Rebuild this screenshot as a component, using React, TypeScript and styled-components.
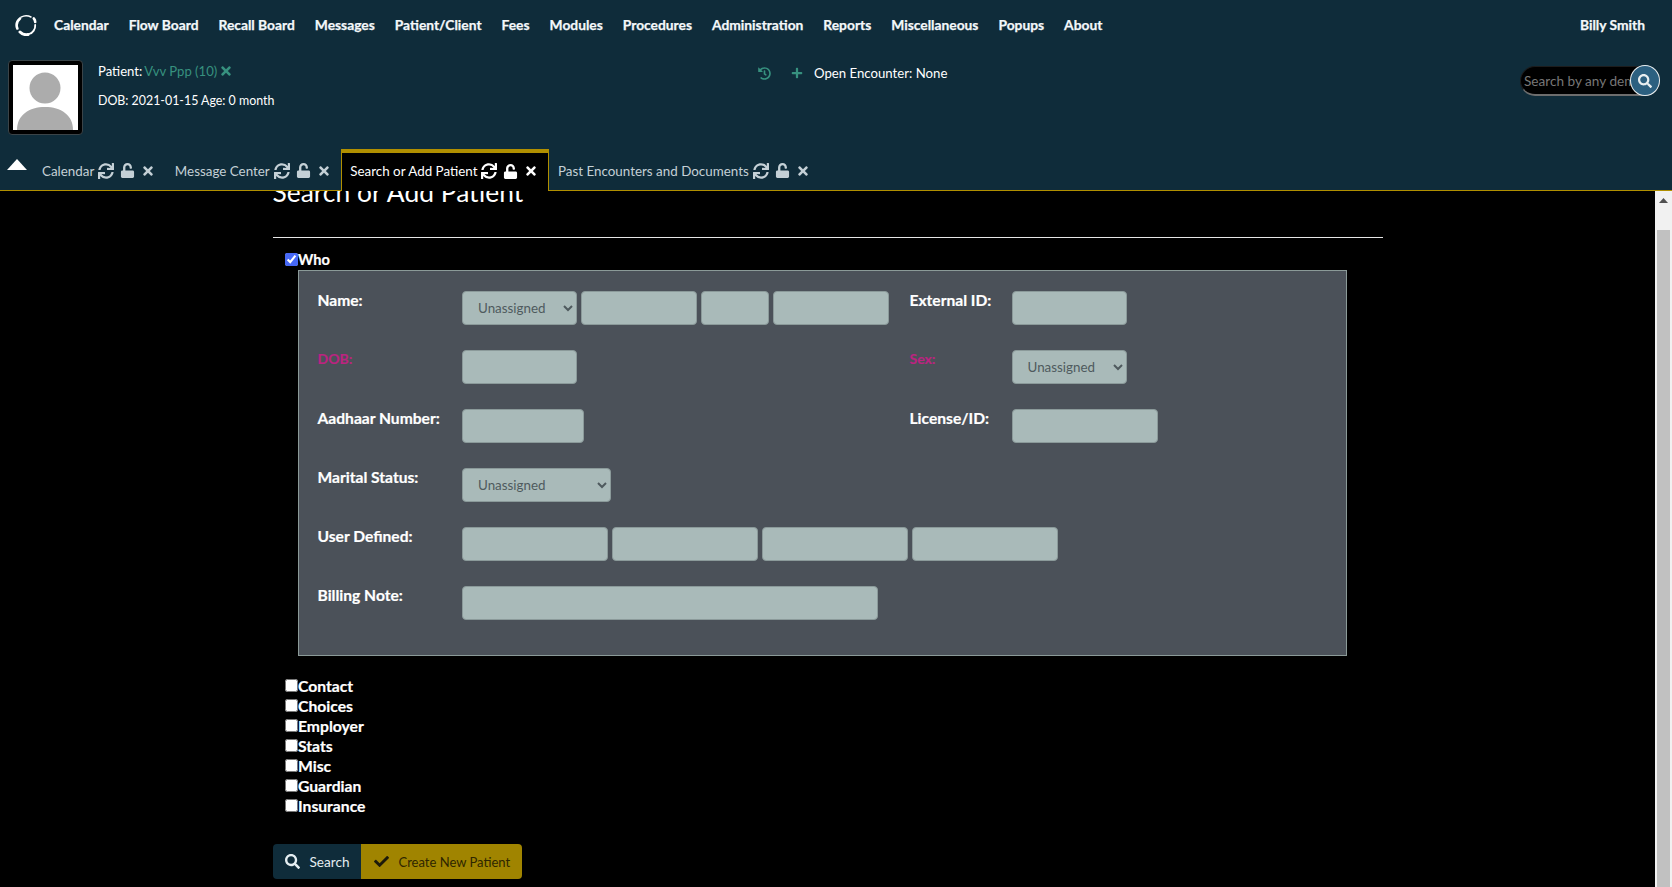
import React from "react";
import styled, { createGlobalStyle } from "styled-components";
import { FaCheck, FaHistory, FaPlus, FaSearch, FaSync, FaTimes, FaUnlock } from "react-icons/fa";

const Global = createGlobalStyle`
  html, body { margin: 0; padding: 0; height: 100%; overflow: hidden; background: #000; }
  body { font-family: "Lato", "Liberation Sans", sans-serif; color: #fff; }
  * { box-sizing: border-box; }
`;

const Page = styled.div`
  display: flex;
  flex-direction: column;
  height: 887px;
  overflow: hidden;
`;
const Header = styled.header`
  flex: none;
  height: 191px;
  background: #0f2c3a;
  border-bottom: 1px solid #b08f00;
`;
const Nav = styled.nav`
  height: 50px;
  display: flex;
  align-items: center;
  padding: 0 27px 1px 15px;
`;
const Logo = styled.svg`
  width: 22px;
  height: 22px;
  margin-right: 17px;
  flex: none;
`;
const Menu = styled.div`
  display: flex;
  gap: 20px;
  flex: 1;
`;
const MenuItem = styled.span`
  font-size: 13.8px;
  font-weight: 700;
  color: #f4f8fa;
  -webkit-text-stroke: 0.25px #f4f8fa;
`;
const Info = styled.div`
  height: 99px;
  display: flex;
  padding: 10px 12px 0 8px;
`;
const Avatar = styled.div`
  width: 75px;
  height: 75px;
  flex: none;
  background: #000;
  border: 1px solid #3b4448;
  border-radius: 4px;
  padding: 4px;
`;
const AvatarArt = styled.svg`
  width: 65px;
  height: 65px;
  display: block;
`;
const PatientBlock = styled.div`
  width: 660px;
  margin: -3px 0 0 15px;
`;
const PatientLine = styled.div<{ $size: number; $gap?: number }>`
  height: 28px;
  display: flex;
  align-items: center;
  gap: 2px;
  font-size: ${(p) => p.$size}px;
  margin-top: ${(p) => p.$gap ?? 0}px;
`;
const PatientLink = styled.span`
  color: #37917f;
`;
const PatientClear = styled(FaTimes)`
  color: #37917f;
  font-size: 14px;
  margin-top: -1px;
`;
const Encounter = styled.div`
  display: flex;
  align-items: center;
  height: 28px;
  font-size: 13.2px;
  margin-top: -1px;
  color: #37917f;
`;
const EncounterAdd = styled(FaPlus)`
  font-size: 12px;
  margin-left: 20px;
`;
const EncounterText = styled.span`
  color: #fff;
  margin-left: 11px;
`;
const SearchBox = styled.div`
  position: relative;
  width: 140px;
  height: 30px;
  margin-left: auto;
  margin-top: 6px;
`;
const SearchInput = styled.input`
  width: 100%;
  height: 100%;
  background: #000;
  border: 1px solid #1d1d1d;
  border-bottom: 2px solid #6d6d6d;
  border-radius: 15px;
  padding: 0 0 0 3px;
  font: 13.6px "Lato", sans-serif;
  &::placeholder { color: #777; }
`;
const SearchRound = styled.div`
  position: absolute;
  right: 0;
  top: -1px;
  width: 30px;
  height: 31px;
  border-radius: 50%;
  background: #2c6080;
  border: 1px solid #e8eef0;
  display: flex;
  align-items: center;
  justify-content: center;
  color: #e8eef0;
  font-size: 14px;
`;
const Tabs = styled.div`
  height: 41px;
  display: flex;
  align-items: stretch;
  padding-left: 7px;
`;
const Collapse = styled.div`
  width: 20px;
  height: 11px;
  margin: 10px 6px 0 0;
  background: #fff;
  clip-path: polygon(50% 0, 100% 100%, 0 100%);
`;
const Tab = styled.div<{ $active?: boolean }>`
  display: flex;
  align-items: center;
  height: ${(p) => (p.$active ? "42px" : "41px")};
  padding: ${(p) => (p.$active ? "0 9.5px 2px 8px" : "2px 9.5px 0 8px")};
  font-size: 13.4px;
  color: ${(p) => (p.$active ? "#fff" : "#c4d0d6")};
  background: ${(p) => (p.$active ? "#000" : "transparent")};
  border-left: 1px solid ${(p) => (p.$active ? "#b08f00" : "transparent")};
  border-right: 1px solid ${(p) => (p.$active ? "#b08f00" : "transparent")};
  border-top: ${(p) => (p.$active ? "4px solid #b08f00" : "0")};
  svg { flex: none; }
`;
const TabLabel = styled.span`
  margin-right: 4px;
`;
const TabIcons = styled.span`
  display: flex;
  align-items: center;
  gap: 6px;
`;
const Body = styled.div`
  flex: 1;
  display: flex;
  min-height: 0;
`;
const Content = styled.main`
  flex: 1;
  min-width: 0;
  overflow: hidden;
`;
const Container = styled.div`
  width: 1110px;
  margin: 0 auto;
`;
const Heading = styled.h2`
  margin: -15px 0 0;
  font-size: 26.4px;
  font-weight: 400;
  line-height: 32px;
  height: 32px;
`;
const Rule = styled.hr`
  border: 0;
  border-top: 1px solid #e6e6e6;
  margin: 29px 0 0;
`;
const Section = styled.div`
  padding-left: 12.5px;
`;
const Check = styled.label`
  display: flex;
  align-items: center;
  height: 20px;
  font-size: 15.7px;
  font-weight: 700;
  line-height: 18px;
  padding-bottom: 2px;
  -webkit-text-stroke: 0.2px #fff;
  input {
    margin: -2px 0 0;
    width: 13px;
    height: 13px;
    accent-color: #4668f5;
  }
`;
const WhoCheck = styled(Check)`
  height: 16px;
  margin-top: 16px;
  padding-bottom: 0;
  font-size: 14.6px;
  input { margin-top: -5px; }
  span { margin-top: -4px; }
`;
const Panel = styled.div`
  width: 1049px;
  margin-left: 13px;
  height: 386px;
  background: #4b5159;
  border: 1px solid #8b9a98;
  padding: 20px 19px 0 18.5px;
  display: flex;
  flex-direction: column;
  gap: 25px;
`;
const Row = styled.div`
  height: 34px;
  display: grid;
  grid-template-columns: 144.5px 447.5px 102px 1fr;
`;
const Label = styled.div<{ $required?: boolean }>`
  font-size: ${(p) => (p.$required ? "14px" : "15.6px")};
  font-weight: 700;
  line-height: 18px;
  color: ${(p) => (p.$required ? "#bb2480" : "#fff")};
  -webkit-text-stroke: 0.2px ${(p) => (p.$required ? "#bb2480" : "#fff")};
`;
const Fields = styled.div<{ $wide?: boolean }>`
  display: flex;
  gap: 4px;
  ${(p) => (p.$wide ? "grid-column: 2 / -1;" : "")}
`;
const Input = styled.input<{ $w: number }>`
  width: ${(p) => p.$w}px;
  height: 34px;
  background: #a9bab9;
  border: 1px solid #8b9a9a;
  border-radius: 4px;
`;
const Select = styled.select<{ $w: number }>`
  width: ${(p) => p.$w}px;
  height: 34px;
  background: #a9bab9;
  border: 1px solid #8b9a9a;
  border-radius: 4px;
  color: #4f5a5e;
  font: 13.4px "Lato", sans-serif;
  padding: 0 0 0 11px;
`;
const Choices = styled.div`
  margin-top: 21px;
`;
const Actions = styled.div`
  display: flex;
  margin-top: 27px;
  height: 35px;
`;
const Action = styled.button<{ $primary?: boolean }>`
  display: flex;
  align-items: center;
  height: 35px;
  border: 0;
  font: ${(p) => (p.$primary ? "13px" : "13.6px")} "Lato", sans-serif;
  white-space: nowrap;
  background: ${(p) => (p.$primary ? "#a08400" : "#0f2c3a")};
  color: ${(p) => (p.$primary ? "#2e2600" : "#e4edf1")};
  border-radius: ${(p) => (p.$primary ? "0 4px 4px 0" : "4px 0 0 4px")};
  padding: ${(p) => (p.$primary ? "0 13px 0 13px" : "0 12px")};
  width: ${(p) => (p.$primary ? 161 : 88)}px;
  gap: 10px;
  svg { flex: none; font-size: 15px; color: ${(p) => (p.$primary ? "#1c1a0a" : "#e4edf1")}; }
`;
const Scrollbar = styled.div`
  flex: none;
  width: 17px;
  background: #f1f1f1;
  display: flex;
  flex-direction: column;
  align-items: center;
`;
const ScrollArrow = styled.div`
  width: 9px;
  height: 5px;
  margin-top: 7px;
  background: #505050;
  clip-path: polygon(50% 0, 100% 100%, 0 100%);
`;
const ScrollThumb = styled.div`
  width: 13px;
  flex: 1;
  margin-top: 27px;
  background: #c1c1c1;
`;

const menu = ["Calendar", "Flow Board", "Recall Board", "Messages", "Patient/Client", "Fees", "Modules", "Procedures", "Administration", "Reports", "Miscellaneous", "Popups", "About"];
const tabs = ["Calendar", "Message Center", "Search or Add Patient", "Past Encounters and Documents"];
const sections = ["Contact", "Choices", "Employer", "Stats", "Misc", "Guardian", "Insurance"];

export default function App() {
  return (
    <Page>
      <Global />
      <Header>
        <Nav>
          <Logo viewBox="0 0 22 22" fill="none" stroke="#fff" strokeLinecap="round">
            <path d="M5 4.5C2 7 1 11 2.3 14.5" strokeWidth="2.6" />
            <path d="M6 3.2C9 1.5 13 1.5 16 3" strokeWidth="1.4" />
            <path d="M18.8 4.5C19.8 5.5 20.2 7 20.2 8" strokeWidth="2.6" />
            <path d="M20.2 11C20.5 15 18 19 14 20" strokeWidth="1.8" />
            <path d="M5 18C7 20 10 21 13 20.5" strokeWidth="3" />
          </Logo>
          <Menu>
            {menu.map((m) => (
              <MenuItem key={m}>{m}</MenuItem>
            ))}
          </Menu>
          <MenuItem>Billy Smith</MenuItem>
        </Nav>
        <Info>
          <Avatar>
            <AvatarArt viewBox="0 0 65 65">
              <rect width="65" height="65" fill="#fff" />
              <circle cx="32" cy="23" r="15.5" fill="#acacac" />
              <path d="M4 65C4 50 16 42 32 42S60 50 60 65Z" fill="#acacac" />
            </AvatarArt>
          </Avatar>
          <PatientBlock>
            <PatientLine $size={13.1}>
              Patient: <PatientLink>Vvv Ppp (10)</PatientLink>
              <PatientClear />
            </PatientLine>
            <PatientLine $size={12.4} $gap={1}>DOB: 2021-01-15 Age: 0 month</PatientLine>
          </PatientBlock>
          <Encounter>
            <FaHistory size={13} />
            <EncounterAdd />
            <EncounterText>Open Encounter: None</EncounterText>
          </Encounter>
          <SearchBox>
            <SearchInput placeholder="Search by any demographics" />
            <SearchRound>
              <FaSearch />
            </SearchRound>
          </SearchBox>
        </Info>
        <Tabs>
          <Collapse />
          {tabs.map((t, i) => (
            <Tab key={t} $active={i === 2}>
              <TabLabel>{t}</TabLabel>
              <TabIcons>
                <FaSync size={16} />
                <FaUnlock size={15} />
                <FaTimes size={14} />
              </TabIcons>
            </Tab>
          ))}
        </Tabs>
      </Header>
      <Body>
        <Content>
          <Container>
            <Heading>Search or Add Patient</Heading>
            <Rule />
            <Section>
              <WhoCheck>
                <input type="checkbox" defaultChecked />
                <span>Who</span>
              </WhoCheck>
              <Panel>
                <Row>
                  <Label>Name:</Label>
                  <Fields>
                    <Select $w={115}><option>Unassigned</option></Select>
                    <Input $w={116} />
                    <Input $w={68} />
                    <Input $w={116} />
                  </Fields>
                  <Label>External ID:</Label>
                  <Fields><Input $w={115} /></Fields>
                </Row>
                <Row>
                  <Label $required>DOB:</Label>
                  <Fields><Input $w={115} /></Fields>
                  <Label $required>Sex:</Label>
                  <Fields><Select $w={115}><option>Unassigned</option></Select></Fields>
                </Row>
                <Row>
                  <Label>Aadhaar Number:</Label>
                  <Fields><Input $w={122} /></Fields>
                  <Label>License/ID:</Label>
                  <Fields><Input $w={146} /></Fields>
                </Row>
                <Row>
                  <Label>Marital Status:</Label>
                  <Fields $wide><Select $w={149}><option>Unassigned</option></Select></Fields>
                </Row>
                <Row>
                  <Label>User Defined:</Label>
                  <Fields $wide>
                    <Input $w={146} />
                    <Input $w={146} />
                    <Input $w={146} />
                    <Input $w={146} />
                  </Fields>
                </Row>
                <Row>
                  <Label>Billing Note:</Label>
                  <Fields $wide><Input $w={416} /></Fields>
                </Row>
              </Panel>
              <Choices>
                {sections.map((s) => (
                  <Check key={s}>
                    <input type="checkbox" />
                    {s}
                  </Check>
                ))}
              </Choices>
            </Section>
            <Actions>
              <Action><FaSearch />Search</Action>
              <Action $primary><FaCheck />Create New Patient</Action>
            </Actions>
          </Container>
        </Content>
        <Scrollbar>
          <ScrollArrow />
          <ScrollThumb />
        </Scrollbar>
      </Body>
    </Page>
  );
}
